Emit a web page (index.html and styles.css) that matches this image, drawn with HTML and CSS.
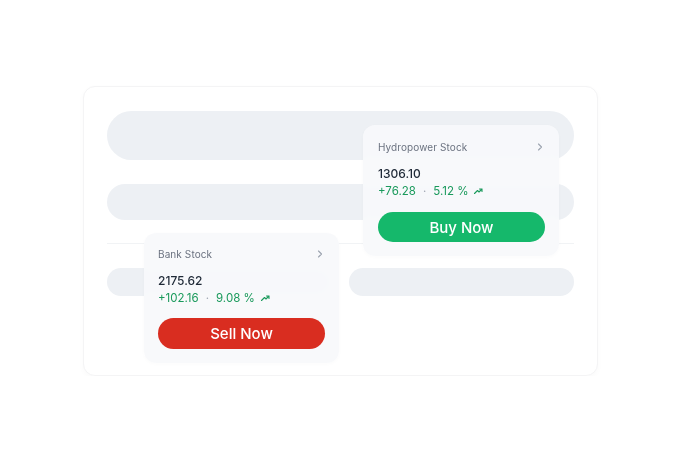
FILE: index.html
```html
<!DOCTYPE html>
<html lang="en">
<head>
  <meta charset="UTF-8" />
  <title>Stock Cards</title>
  <link rel="stylesheet" href="styles.css">
</head>
<body>
  <div class="stage">
    <div class="panel">
      <div class="bar bar-lg"></div>
      <div class="bar bar-md"></div>
      <div class="divider"></div>
      <div class="bar-row">
        <div class="bar bar-sm"></div>
        <div class="bar bar-sm"></div>
      </div>

      <div class="stock-card hydro">
        <div class="stock-head">
          <span>Hydropower Stock</span>
          <svg class="chev" width="6" height="8" viewBox="0 0 6 8"><path d="M1.5 1l3 3-3 3" fill="none" stroke="#9ca3af" stroke-width="1.1" stroke-linecap="round" stroke-linejoin="round"/></svg>
        </div>
        <div class="price">1306.10</div>
        <div class="change">+76.28 <span class="dot">·</span> 5.12 %
          <svg class="up" width="10" height="8" viewBox="0 0 10 8"><path d="M1.5 6.5l3-3 1.5 1.5 3-3M6.5 2h2.5v2.5" fill="none" stroke="#1a9a5c" stroke-width="1.1" stroke-linecap="round" stroke-linejoin="round"/></svg>
        </div>
        <button class="btn btn-buy">Buy Now</button>
      </div>

      <div class="stock-card bank">
        <div class="stock-head">
          <span>Bank Stock</span>
          <svg class="chev" width="6" height="8" viewBox="0 0 6 8"><path d="M1.5 1l3 3-3 3" fill="none" stroke="#9ca3af" stroke-width="1.1" stroke-linecap="round" stroke-linejoin="round"/></svg>
        </div>
        <div class="price">2175.62</div>
        <div class="change">+102.16 <span class="dot">·</span> 9.08 %
          <svg class="up" width="10" height="8" viewBox="0 0 10 8"><path d="M1.5 6.5l3-3 1.5 1.5 3-3M6.5 2h2.5v2.5" fill="none" stroke="#1a9a5c" stroke-width="1.1" stroke-linecap="round" stroke-linejoin="round"/></svg>
        </div>
        <button class="btn btn-sell">Sell Now</button>
      </div>
    </div>
  </div>
</body>
</html>
```

FILE: styles.css
```css
body { margin: 0; background: #fff; font-family: Inter, "Noto Sans", sans-serif; }
.stage { padding: 86px 0 0 83px; }
.panel {
  position: relative;
  width: 467px; height: 240px;
  padding: 24px 23px;
  background: #fff;
  border: 1px solid #f4f4f5;
  border-radius: 12px;
  box-shadow: 0 2px 6px rgba(0,0,0,0.025);
}
.bar { background: #edf0f4; border-radius: 999px; }
.bar-lg { height: 49px; margin-bottom: 24px; }
.bar-md { height: 36px; }
.divider { height: 1px; background: #f1f3f5; margin: 23px 0 24px; }
.bar-row { display: grid; grid-template-columns: 1fr 1fr; gap: 17px; }
.bar-sm { height: 28px; }

.stock-card {
  position: absolute;
  box-sizing: border-box;
  padding: 14px 14px 14px 15px;
  background: rgba(248,249,251,0.93);
  backdrop-filter: blur(4px);
  border-radius: 12px;
  box-shadow: 0 1px 4px rgba(0,0,0,0.02);
}
.hydro { left: 279px; top: 38px; width: 196px; height: 131px; }
.bank { left: 60px; top: 146px; width: 195px; height: 130px; padding: 13px 14px 14px; }

.stock-head {
  display: flex; justify-content: space-between; align-items: center;
  height: 16px; font-size: 10px; color: #6b7280; letter-spacing: 0.1px;
}
.chev { margin-right: 2px; }
.price { margin-top: 11px; font-size: 12px; line-height: 16px; color: #1f2937; font-weight: 500; }
.change { margin-top: 1px; font-size: 11.5px; line-height: 16px; color: #1a9a5c; display: flex; align-items: center; gap: 4px; }
.dot { color: #9ca3af; padding: 0 3px; }
.up { margin-left: 1px; }

.btn {
  display: block; width: 100%; height: 30px; margin-top: 13px;
  border: none; border-radius: 999px; color: #fff;
  font-family: Inter, "Noto Sans", sans-serif; font-size: 15px; font-weight: 500;
}
.btn-buy { background: #15b86b; }
.btn-sell { background: #d92d20; height: 31px; margin-top: 12px; }
```
